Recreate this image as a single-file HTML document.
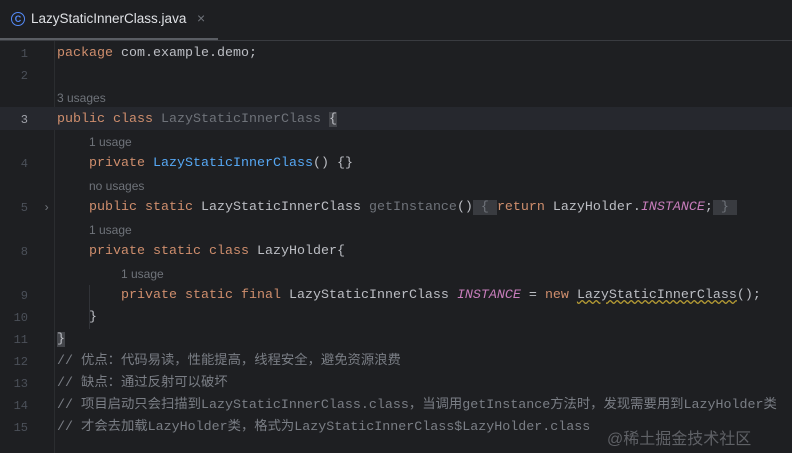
<!DOCTYPE html>
<html><head><meta charset="utf-8"><style>
body{margin:0;width:792px;height:453px;background:#1e1f22;overflow:hidden;position:relative;font-family:"Liberation Mono","Noto Sans CJK SC",monospace;}
.tabbar{position:absolute;left:0;top:0;width:792px;height:40px;background:#1e1f22;border-bottom:1px solid #393b40;}
.tab{position:absolute;left:0;top:0;width:218px;height:38px;border-bottom:2px solid #5a5d63;box-sizing:content-box;}
.tabt{position:absolute;left:31px;top:11px;font-family:"Liberation Sans",sans-serif;font-size:13.5px;color:#dfe1e5;}
.x{position:absolute;left:197px;top:10px;color:#6f737a;font-family:"Liberation Sans",sans-serif;font-size:14px;}
.ic{position:absolute;left:11px;top:12px;width:12px;height:12px;border:1.5px solid #548af7;border-radius:50%;color:#548af7;font:bold 9px "Liberation Sans",sans-serif;text-align:center;line-height:12px;}
.sep{position:absolute;left:54px;top:41px;width:1px;height:412px;background:#2b2d30;}
.row{position:absolute;left:0;height:22px;width:792px;line-height:22px;font-size:13.33px;color:#bcbec4;white-space:pre;}
.n{position:absolute;width:28px;text-align:right;left:0;color:#4b5059;font-size:12px;}
.c{position:absolute;left:57px;}
.k{color:#cf8e6d}.g{color:#6f737a}.p{color:#c77dbb;font-style:italic}.b{color:#56a8f5}.cm{color:#7a7e85}
.u{font-family:"Liberation Sans",sans-serif;font-size:12px;color:#6f737a;}
.box{background:#393b40;color:#6f737a;}
.guide{position:absolute;width:1px;background:#313338;}
</style></head><body>
<div class="tabbar"><div class="tab"></div><div class="ic">C</div><div class="tabt">LazyStaticInnerClass.java</div><div class="x">×</div></div>
<div class="sep"></div>
<div class="row" style="top:107px;background:#26282e;height:23px"></div>
<div class="guide" style="left:89px;top:285px;height:44px"></div>
<div class="row" style="top:43px"><span class="n">1</span><span class="c"><span class="k">package</span> com.example.demo;</span></div>
<div class="row" style="top:65px"><span class="n">2</span></div>
<div class="row" style="top:87px"><span class="c u">3 usages</span></div>
<div class="row" style="top:109px"><span class="n" style="color:#a1a3ab">3</span><span class="c"><span class="k">public class</span> <span class="g">LazyStaticInnerClass</span> <span style="background:#43454a">{</span></span></div>
<div class="row" style="top:131px"><span class="c u" style="left:89px">1 usage</span></div>
<div class="row" style="top:153px"><span class="n">4</span><span class="c" style="left:89px"><span class="k">private</span> <span class="b">LazyStaticInnerClass</span>() {}</span></div>
<div class="row" style="top:175px"><span class="c u" style="left:89px">no usages</span></div>
<div class="row" style="top:197px"><span class="n">5</span><span style="position:absolute;left:43px;color:#6f737a;font-size:12px">›</span><span class="c" style="left:89px"><span class="k">public static</span> LazyStaticInnerClass <span class="g">getInstance</span>()<span class="box"> { </span><span class="k">return</span> LazyHolder.<span class="p">INSTANCE</span>;<span class="box"> } </span></span></div>
<div class="row" style="top:219px"><span class="c u" style="left:89px">1 usage</span></div>
<div class="row" style="top:241px"><span class="n">8</span><span class="c" style="left:89px"><span class="k">private static class</span> LazyHolder{</span></div>
<div class="row" style="top:263px"><span class="c u" style="left:121px">1 usage</span></div>
<div class="row" style="top:285px"><span class="n">9</span><span class="c" style="left:121px"><span class="k">private static final</span> LazyStaticInnerClass <span class="p">INSTANCE</span> = <span class="k">new</span> <span style="text-decoration:underline wavy #b59b34">LazyStaticInnerClass</span>();</span></div>
<div class="row" style="top:307px"><span class="n">10</span><span class="c" style="left:89px">}</span></div>
<div class="row" style="top:329px"><span class="n">11</span><span class="c"><span style="background:#43454a">}</span></span></div>
<div class="row" style="top:351px"><span class="n">12</span><span class="c cm">// 优点：代码易读，性能提高，线程安全，避免资源浪费</span></div>
<div class="row" style="top:373px"><span class="n">13</span><span class="c cm">// 缺点：通过反射可以破坏</span></div>
<div class="row" style="top:395px"><span class="n">14</span><span class="c cm">// 项目启动只会扫描到LazyStaticInnerClass.class，当调用getInstance方法时，发现需要用到LazyHolder类</span></div>
<div class="row" style="top:417px"><span class="n">15</span><span class="c cm">// 才会去加载LazyHolder类，格式为LazyStaticInnerClass$LazyHolder.class</span></div>
<div style="position:absolute;left:607px;top:425px;font-family:'Liberation Sans','Noto Sans CJK SC',sans-serif;font-size:16px;color:#5f6166">@稀土掘金技术社区</div>
</body></html>
